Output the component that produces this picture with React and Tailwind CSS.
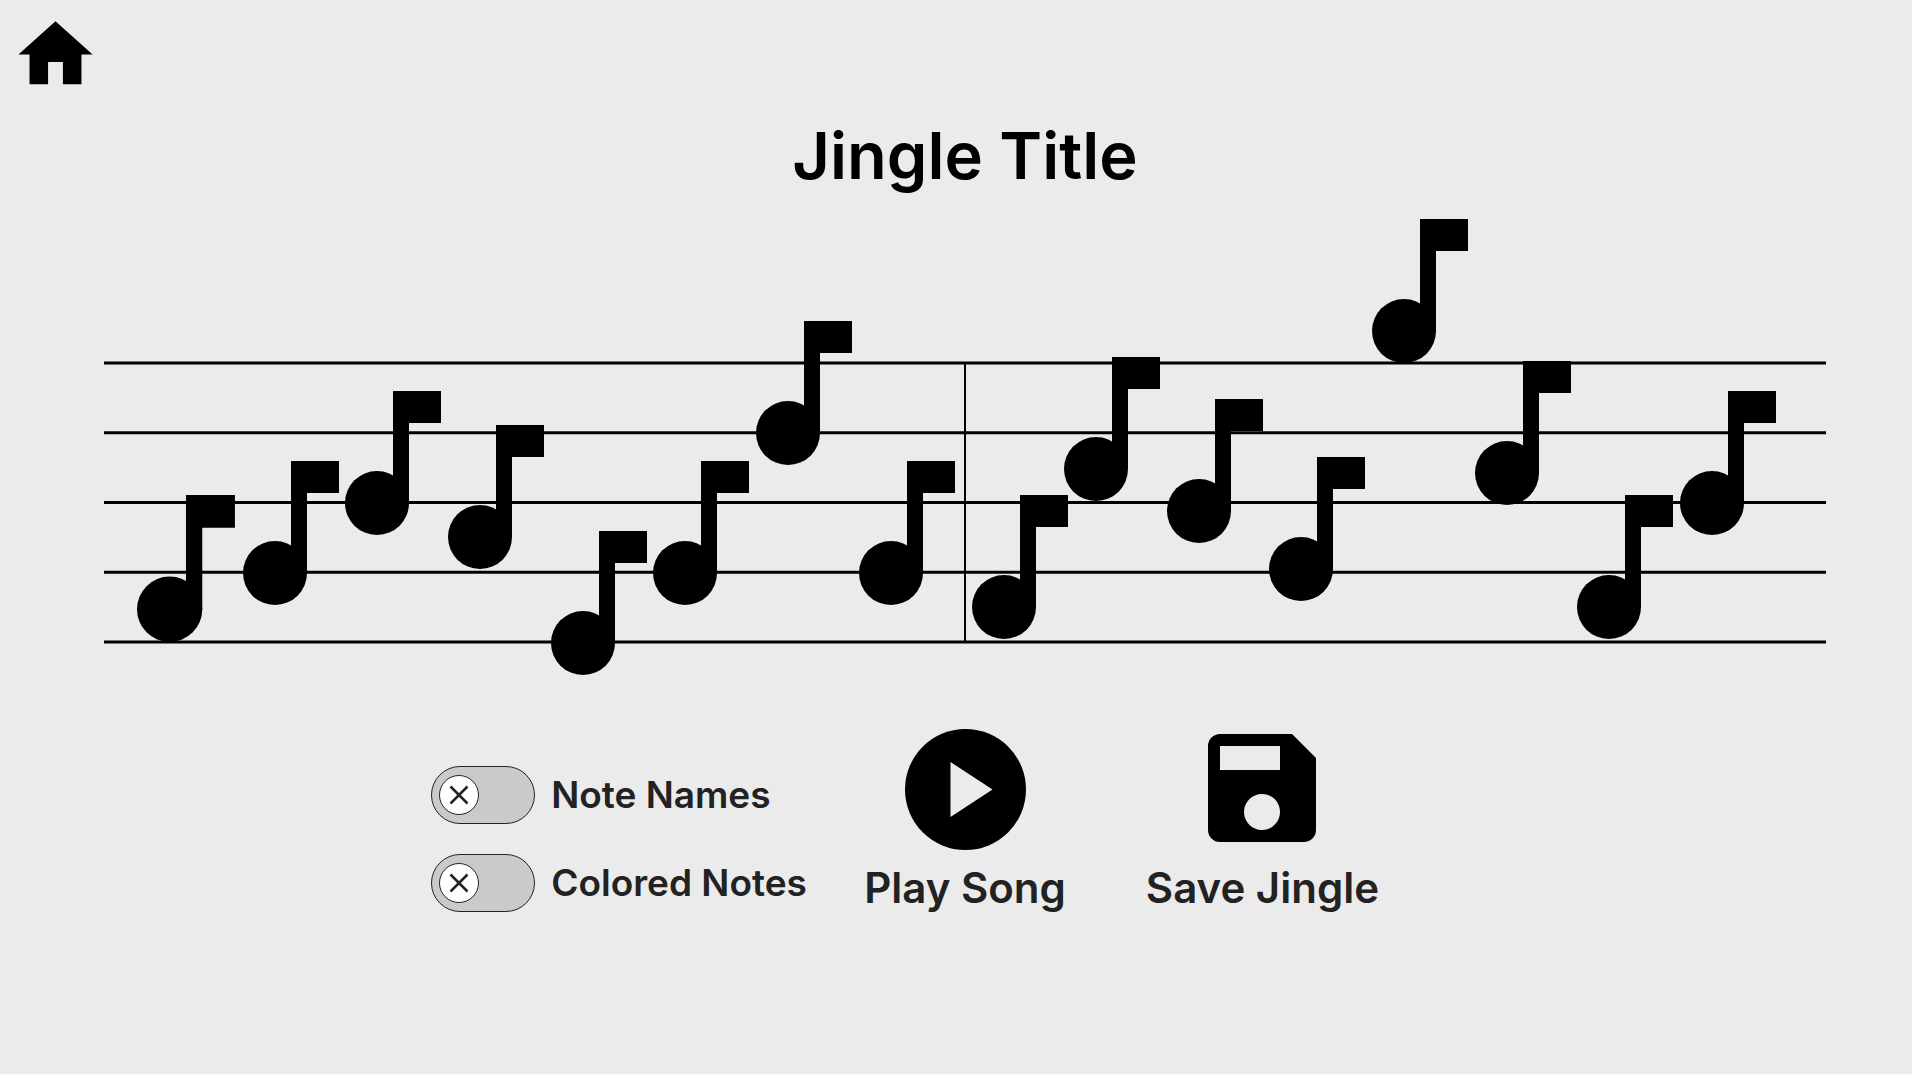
import { useState } from "react";
import { MdHome, MdSave } from "react-icons/md";

// Each note is placed by the left edge of its head and the top of its flag.
const NOTES = [
  [33, 276, 1.02],
  [139, 242],
  [241, 172],
  [344, 206],
  [447, 312],
  [549, 242],
  [652, 102],
  [755, 242],
  [868, 276],
  [960, 138],
  [1063, 180],
  [1165, 238],
  [1268, 0],
  [1371, 142],
  [1473, 276],
  [1576, 172],
];

const STAFF_TOP = 144;
const STAFF_HEIGHT = 279;
const LINES = [0, 1, 2, 3, 4].map((i) => STAFF_TOP + (i * STAFF_HEIGHT) / 4);

function Staff() {
  return (
    <svg viewBox="0 0 1722 456" className="block w-full" role="img" aria-label="Jingle notes">
      {LINES.map((y) => (
        <line key={y} x1="0" x2="1722" y1={y} y2={y} stroke="#000" strokeWidth="3" />
      ))}
      <line x1="861" x2="861" y1="144" y2="423" stroke="#000" strokeWidth="2" />
      {NOTES.map(([x, y, scale = 1]) => (
        <g key={x} transform={`translate(${x} ${y}) scale(${scale})`}>
          <circle cx="32" cy="112" r="32" />
          <path d="M48 0h48v32H64v80H48z" />
        </g>
      ))}
    </svg>
  );
}

function Toggle({ id, label }) {
  const [on, setOn] = useState(false);
  return (
    <div className="flex items-center gap-4">
      <span className="grid shrink-0 items-center">
        <input
          id={id}
          type="checkbox"
          role="switch"
          checked={on}
          onChange={() => setOn(!on)}
          className="peer col-start-1 row-start-1 h-[58px] w-[104px] cursor-pointer appearance-none rounded-full border border-[#222] bg-[#cbc9ca] checked:bg-green-300"
        />
        <svg
          viewBox="0 0 40 40"
          className="pointer-events-none col-start-1 row-start-1 ml-2 size-10 transition-transform peer-checked:translate-x-12"
          aria-hidden="true"
        >
          <circle cx="20" cy="20" r="19.5" fill="#fff" stroke="#222" />
          <path
            d={on ? "M11 20.500l6 6L29 14" : "M11.500 11.500l17 17M28.500 11.500l-17 17"}
            fill="none"
            stroke="#222"
            strokeWidth="2.500"
          />
        </svg>
      </span>
      <label htmlFor={id} className="cursor-pointer whitespace-nowrap text-[37px] leading-10">
        {label}
      </label>
    </div>
  );
}

function PlayIcon() {
  return (
    <svg viewBox="0 0 121 121" className="size-[121px]" aria-hidden="true">
      <circle cx="60.5" cy="60.5" r="60.5" />
      <path d="M45.500 33l42 27.500L45.500 88z" fill="#ebebeb" />
    </svg>
  );
}

export default function App() {
  return (
    <div className="min-h-screen bg-[#ebebeb] font-['Inter',sans-serif] font-semibold text-black">
      <header className="flex h-[120px] items-start pl-[11px] pt-[10px]">
        <a href="#home" aria-label="Home">
          <MdHome className="size-[89px]" />
        </a>
      </header>
      <main className="pl-[104px] pr-[86px]">
        <h1 className="h-[99px] text-center text-[65px] leading-[72px]">Jingle Title</h1>
        <Staff />
        <div className="mt-[54px] grid grid-cols-[1fr_auto_1fr] items-start gap-x-16 text-[#222]">
          <div className="flex w-[369px] flex-col gap-[30px] justify-self-end pt-[37px]">
            <Toggle id="note-names" label="Note Names" />
            <Toggle id="colored-notes" label="Colored Notes" />
          </div>
          <button type="button" className="flex cursor-pointer flex-col items-center gap-4 text-[42px] leading-11">
            <span className="text-black">
              <PlayIcon />
            </span>
            Play Song
          </button>
          <button
            type="button"
            className="ml-4 flex cursor-pointer flex-col items-center gap-4 justify-self-start text-[42px] leading-11"
          >
            <span className="flex h-[121px] items-center pb-1 text-black">
              <MdSave className="size-36" />
            </span>
            Save Jingle
          </button>
        </div>
      </main>
    </div>
  );
}
